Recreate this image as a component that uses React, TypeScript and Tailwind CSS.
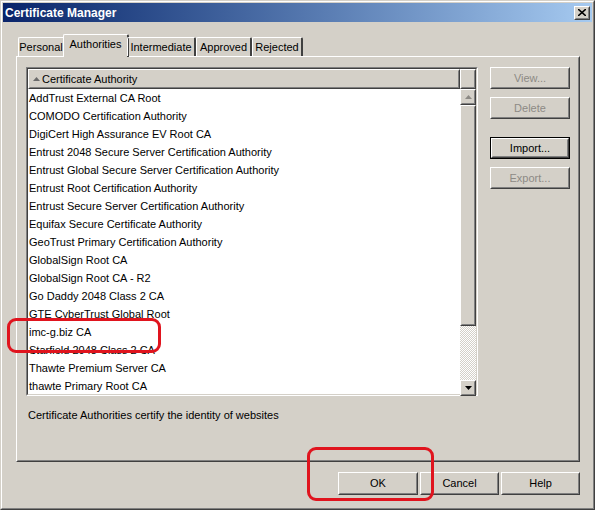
import React from 'react';

const rows = [
  'AddTrust External CA Root',
  'COMODO Certification Authority',
  'DigiCert High Assurance EV Root CA',
  'Entrust 2048 Secure Server Certification Authority',
  'Entrust Global Secure Server Certification Authority',
  'Entrust Root Certification Authority',
  'Entrust Secure Server Certification Authority',
  'Equifax Secure Certificate Authority',
  'GeoTrust Primary Certification Authority',
  'GlobalSign Root CA',
  'GlobalSign Root CA - R2',
  'Go Daddy 2048 Class 2 CA',
  'GTE CyberTrust Global Root',
  'imc-g.biz CA',
  'Starfield 2048 Class 2 CA',
  'Thawte Premium Server CA',
  'thawte Primary Root CA',
];

const tabs = [
  { label: 'Personal', w: 'w-[47px]' },
  { label: 'Authorities', w: 'w-[66px]', active: true },
  { label: 'Intermediate', w: 'w-[69px]' },
  { label: 'Approved', w: 'w-[56px]' },
  { label: 'Rejected', w: 'w-[51px]' },
];

// classic raised 3d box
function Raised({ className = '', children }: { className?: string; children?: React.ReactNode }) {
  return (
    <div className={`border border-t-white border-l-white border-r-[#404040] border-b-[#404040] ${className}`}>
      <div className="w-full h-full border border-t-[#d4d0c8] border-l-[#d4d0c8] border-r-[#808080] border-b-[#808080] flex items-center justify-center">
        {children}
      </div>
    </div>
  );
}

function Btn({ label, disabled, isDefault, className = '' }: { label: string; disabled?: boolean; isDefault?: boolean; className?: string }) {
  const inner = (
    <Raised className="w-full h-full">
      <span className={disabled ? 'text-[#8d8a85]' : 'text-black'}>{label}</span>
    </Raised>
  );
  if (isDefault) {
    return <div className={`border border-black ${className}`}>{inner}</div>;
  }
  return <div className={className}>{inner}</div>;
}

function Arrow({ up, color }: { up?: boolean; color: string }) {
  return (
    <svg width="7" height="4" viewBox="0 0 7 4">
      <polygon points={up ? '3.5,0 7,4 0,4' : '0,0 7,0 3.5,4'} fill={color} />
    </svg>
  );
}

export default function App() {
  return (
    <div
      className="w-[595px] h-[510px] bg-[#d4d0c8] text-[11px] text-black relative"
      style={{ fontFamily: '"Liberation Sans", Arial, sans-serif' }}
    >
      <div className="w-full h-full border border-t-[#d4d0c8] border-l-[#d4d0c8] border-r-[#404040] border-b-[#404040]">
        <div className="w-full h-full border border-t-white border-l-white border-r-[#808080] border-b-[#808080] p-px flex flex-col">
          {/* Title bar */}
          <div className="h-[19px] flex items-center justify-between pl-[2px] pr-[2px] bg-gradient-to-r from-[#0a246a] to-[#a6caf0]">
            <span className="text-white font-bold text-[12px] leading-none">Certificate Manager</span>
            <Raised className="w-[16px] h-[14px] bg-[#d4d0c8]">
              <svg width="8" height="7" viewBox="0 0 8 7">
                <path d="M0 0 L8 7 M8 0 L0 7" stroke="black" strokeWidth="1.6" />
              </svg>
            </Raised>
          </div>

          {/* Tabs */}
          <div className="mt-[12px] h-[22px] flex items-end pl-[15px] relative z-10">
            {tabs.map((t) =>
              t.active ? (
                <div
                  key={t.label}
                  className={`${t.w} h-[23px] -mx-[2px] -mb-px bg-[#d4d0c8] border-t border-l border-t-white border-l-white border-r-2 border-r-[#404040] rounded-t-[2px] flex items-center justify-center pb-[3px]`}
                >
                  {t.label}
                </div>
              ) : (
                <div
                  key={t.label}
                  className={`${t.w} h-[19px] border-t border-l border-t-white border-l-white border-r-2 border-r-[#404040] rounded-t-[2px] flex items-center justify-center pt-px`}
                >
                  {t.label}
                </div>
              )
            )}
          </div>

          {/* Panel */}
          <div className="ml-[13px] w-[564px] h-[406px] border border-t-white border-l-white border-r-[#404040] border-b-[#404040]">
            <div className="w-full h-full border border-t-[#d4d0c8] border-l-[#d4d0c8] border-r-[#808080] border-b-[#808080] pt-[9px] pl-[8px] pr-[8px] flex flex-col">
              <div className="flex gap-[12px]">
                {/* List box */}
                <div className="w-[452px] h-[329px] border border-t-[#808080] border-l-[#808080] border-r-white border-b-white">
                  <div className="w-full h-full border border-t-[#404040] border-l-[#404040] border-r-[#d4d0c8] border-b-[#d4d0c8] bg-white flex flex-col">
                    <div className="flex h-[20px]">
                      <Raised className="flex-1 h-full bg-[#d4d0c8]">
                        <div className="w-full flex items-center gap-[2px] pl-[3px]">
                          <Arrow up color="#6b6b6b" />
                          <span>Certificate Authority</span>
                        </div>
                      </Raised>
                      <Raised className="w-[16px] h-full bg-[#d4d0c8]" />
                    </div>
                    <div className="flex flex-1">
                      <div className="flex-1 flex flex-col pl-px overflow-hidden">
                        {rows.map((r) => (
                          <div key={r} className="h-[18px] leading-[18px] whitespace-nowrap">
                            {r}
                          </div>
                        ))}
                      </div>
                      <div className="w-[16px] flex flex-col">
                        <Raised className="w-[16px] h-[16px] bg-[#d4d0c8]">
                          <Arrow up color="#8d8a85" />
                        </Raised>
                        <Raised className="w-[16px] h-[221px] bg-[#d4d0c8]" />
                        <div className="w-[16px] h-[54px] bg-[repeating-conic-gradient(#d4d0c8_0_25%,#ffffff_0_50%)] bg-[length:2px_2px]" />
                        <Raised className="w-[16px] h-[16px] bg-[#d4d0c8]">
                          <Arrow color="black" />
                        </Raised>
                      </div>
                    </div>
                  </div>
                </div>

                {/* Side buttons */}
                <div className="flex flex-col w-[80px]">
                  <Btn label="View..." disabled className="h-[22px]" />
                  <Btn label="Delete" disabled className="h-[22px] mt-[8px]" />
                  <Btn label="Import..." isDefault className="h-[22px] mt-[18px]" />
                  <Btn label="Export..." disabled className="h-[22px] mt-[8px]" />
                </div>
              </div>
              <div className="mt-[11px] pl-[2px]">Certificate Authorities certify the identity of websites</div>
            </div>
          </div>

          {/* Bottom buttons */}
          <div className="mt-[10px] flex justify-end gap-[2px] pr-[12px]">
            <Btn label="OK" className="w-[80px] h-[23px]" />
            <Btn label="Cancel" className="w-[79px] h-[23px]" />
            <Btn label="Help" className="w-[79px] h-[23px]" />
          </div>
        </div>
      </div>

      {/* red annotation marks */}
      <div className="absolute left-[7px] top-[318px] w-[154px] h-[35px] border-[3px] border-[#e0141e] rounded-[9px]" />
      <div className="absolute left-[307px] top-[447px] w-[127px] h-[54px] border-[3px] border-[#e0141e] rounded-[9px]" />
    </div>
  );
}
